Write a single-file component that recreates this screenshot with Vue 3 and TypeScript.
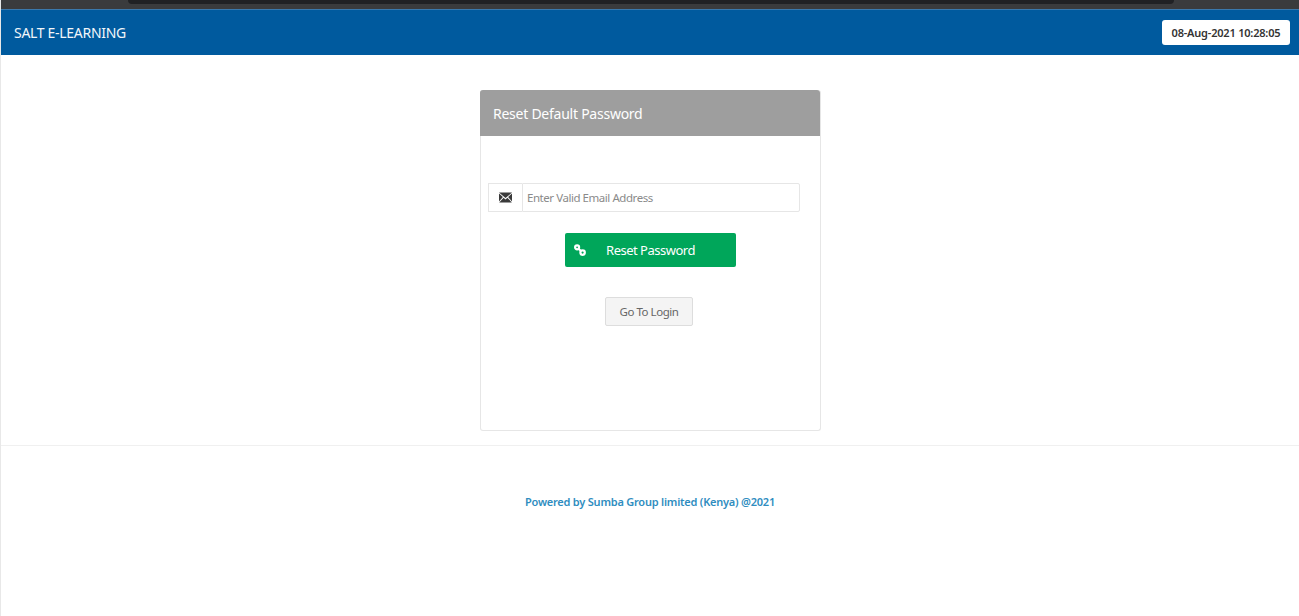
<script setup lang="ts">
const title: string = 'SALT E-LEARNING'
</script>

<template>
  <div class="page">
    <div class="chrome"><div class="tab"></div></div>
    <header class="bar">
      <span class="brand">{{ title }}</span>
      <span class="clock">08-Aug-2021 10:28:05</span>
    </header>
    <main class="main">
      <section class="card">
        <div class="card-head">Reset Default Password</div>
        <div class="card-body">
          <div class="group">
            <span class="addon">
              <svg width="13" height="11" viewBox="0 0 13 11"><path fill="#3a3a3a" d="M0 .5h13L6.5 6zM0 1.6l3.9 3.5L0 9.4zM13 1.6 9.1 5.1 13 9.4zM4.6 5.7l1.9 1.7 1.9-1.7 4.4 4.8H.2z"/></svg>
            </span>
            <input class="field" type="text" placeholder="Enter Valid Email Address" />
          </div>
          <button class="btn-reset" type="button">
            <svg class="link" width="12" height="12" viewBox="0 0 12 12"><g fill="none" stroke="#fff" stroke-width="2.2"><circle cx="3.1" cy="3.3" r="2"/><circle cx="8.6" cy="8.6" r="2.2"/><path d="M4.6 4.8l2.6 2.4"/></g></svg>
            <span>Reset Password</span>
          </button>
          <button class="btn-login" type="button">Go To Login</button>
        </div>
      </section>
    </main>
    <footer class="foot">Powered by Sumba Group limited (Kenya) @2021</footer>
  </div>
</template>

<style>
html, body { margin: 0; background: #fff; }
</style>

<style scoped>
.page {
  height: 616px;
  overflow: hidden;
  box-sizing: border-box;
  border-left: 1px solid #e8e8e8;
  font-family: "Noto Sans", sans-serif;
  display: flex;
  flex-direction: column;
}
.chrome { height: 9px; background: #3a3b3d; margin-left: -1px; flex: none; }
.tab { height: 4px; margin: 0 125px 0 128px; background: #202124; border-radius: 0 0 8px 8px; }
.bar {
  height: 46px;
  flex: none;
  background: #005a9e;
  margin-left: -1px;
  padding: 0 9px 0 14px;
  display: flex;
  align-items: center;
  justify-content: space-between;
  border-top: 1px solid #3a78ac;
  box-sizing: border-box;
}
.brand { color: #f2f6fa; font-size: 14px; letter-spacing: -0.3px; }
.clock {
  background: #fff;
  color: #333;
  font-size: 11px;
  font-weight: 600;
  letter-spacing: -0.2px;
  border-radius: 3px;
  width: 128px;
  height: 25px;
  line-height: 25px;
  text-align: center;
  margin-bottom: 1px;
}
.main { padding-top: 35px; display: flex; justify-content: center; height: 391px; box-sizing: border-box; border-bottom: 1px solid #f0f0f0; flex: none; }
.card {
  width: 341px;
  height: 341px;
  box-sizing: border-box;
  border: 1px solid #e6e6e6;
  border-top: 0;
  border-radius: 3px;
  margin-left: 1px;
}
.card-head {
  height: 46px;
  margin-left: -1px;
  background: #9e9e9e;
  color: #fff;
  font-size: 14px;
  letter-spacing: -0.25px;
  line-height: 47px;
  padding-left: 13px;
  border-radius: 3px 3px 0 0;
  width: 340px;
  box-sizing: border-box;
}
.card-body { display: flex; flex-direction: column; align-items: center; }
.group { display: flex; width: 312px; height: 29px; margin: 47px 0 0 -13px; }
.addon {
  width: 34px;
  box-sizing: border-box;
  border: 1px solid #e6e6e6;
  border-right: 0;
  display: flex;
  align-items: center;
  justify-content: center;
}
.field {
  flex: 1;
  min-width: 0;
  border: 1px solid #e6e6e6;
  border-radius: 0 2px 2px 0;
  padding: 0 4px;
  font: 11.5px "Noto Sans", sans-serif;
  letter-spacing: -0.45px;
  outline: none;
}
.field::placeholder { color: #8a8a8a; opacity: 1; }
.btn-reset {
  position: relative;
  width: 171px;
  height: 34px;
  margin-top: 21px;
  border: 0;
  border-radius: 2px;
  background: #00a65a;
  color: #fff;
  font: 13px "Noto Sans", sans-serif;
  letter-spacing: -0.5px;
  padding: 0;
}
.link { position: absolute; left: 9px; top: 11px; }
.btn-login {
  width: 88px;
  height: 29px;
  margin-top: 30px;
  margin-left: -3px;
  background: #f4f4f4;
  border: 1px solid #ddd;
  border-radius: 2px;
  color: #666;
  font: 11.5px "Noto Sans", sans-serif;
  letter-spacing: -0.45px;
  padding: 0;
}
.foot {
  text-align: center;
  color: #2f8dbf;
  font-size: 11px;
  font-weight: 600;
  letter-spacing: -0.22px;
  margin-top: 48px;
  line-height: 16px;
}
</style>
